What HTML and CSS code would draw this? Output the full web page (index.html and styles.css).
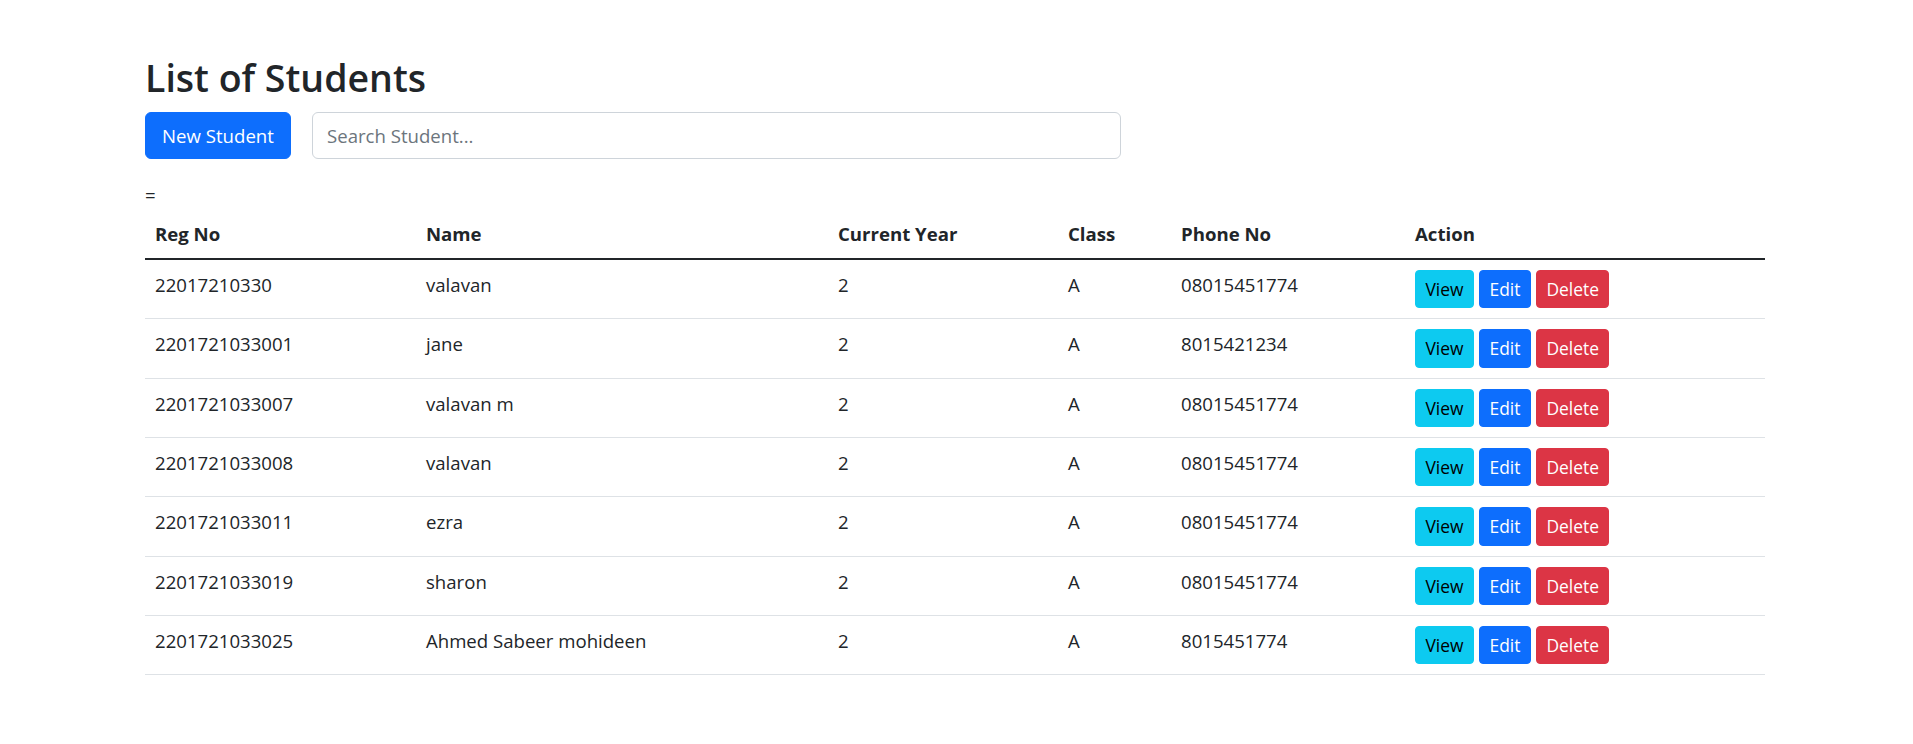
FILE: index.html
```html
<!DOCTYPE html>
<html lang="en">
<head>
<meta charset="utf-8">
<title>List of Students</title>
<link rel="stylesheet" href="styles.css">
</head>
<body>
<div class="page">
  <h2 class="title">List of Students</h2>
  <div class="toolbar">
    <button class="btn btn-primary btn-new">New Student</button>
    <input class="search" type="text" placeholder="Search Student...">
  </div>
  <div class="stray">=</div>
  <table class="table">
    <colgroup>
      <col class="c1"><col class="c2"><col class="c3"><col class="c4"><col class="c5"><col class="c6">
    </colgroup>
    <thead>
      <tr><th>Reg No</th><th>Name</th><th>Current Year</th><th>Class</th><th>Phone No</th><th>Action</th></tr>
    </thead>
    <tbody>
      <tr><td>22017210330</td><td>valavan</td><td>2</td><td>A</td><td>08015451774</td>
        <td><div class="actions"><button class="sbtn info">View</button><button class="sbtn primary">Edit</button><button class="sbtn danger">Delete</button></div></td></tr>
      <tr><td>2201721033001</td><td>jane</td><td>2</td><td>A</td><td>8015421234</td>
        <td><div class="actions"><button class="sbtn info">View</button><button class="sbtn primary">Edit</button><button class="sbtn danger">Delete</button></div></td></tr>
      <tr><td>2201721033007</td><td>valavan m</td><td>2</td><td>A</td><td>08015451774</td>
        <td><div class="actions"><button class="sbtn info">View</button><button class="sbtn primary">Edit</button><button class="sbtn danger">Delete</button></div></td></tr>
      <tr><td>2201721033008</td><td>valavan</td><td>2</td><td>A</td><td>08015451774</td>
        <td><div class="actions"><button class="sbtn info">View</button><button class="sbtn primary">Edit</button><button class="sbtn danger">Delete</button></div></td></tr>
      <tr><td>2201721033011</td><td>ezra</td><td>2</td><td>A</td><td>08015451774</td>
        <td><div class="actions"><button class="sbtn info">View</button><button class="sbtn primary">Edit</button><button class="sbtn danger">Delete</button></div></td></tr>
      <tr><td>2201721033019</td><td>sharon</td><td>2</td><td>A</td><td>08015451774</td>
        <td><div class="actions"><button class="sbtn info">View</button><button class="sbtn primary">Edit</button><button class="sbtn danger">Delete</button></div></td></tr>
      <tr><td>2201721033025</td><td>Ahmed Sabeer mohideen</td><td>2</td><td>A</td><td>8015451774</td>
        <td><div class="actions"><button class="sbtn info">View</button><button class="sbtn primary">Edit</button><button class="sbtn danger">Delete</button></div></td></tr>
    </tbody>
  </table>
</div>
</body>
</html>
```
FILE: styles.css
```css
* { box-sizing: border-box; }
html, body { margin: 0; padding: 0; background: #fff; }
body {
  font-family: "Open Sans", "Noto Sans", sans-serif;
  font-size: 18.6px;
  line-height: 30px;
  color: #212529;
}
.page {
  padding: 54px 148px 0 145px;
}
.title {
  margin: 0 0 10px 0;
  font-size: 37.5px;
  line-height: 48px;
  font-weight: 600;
}
.toolbar {
  display: flex;
  gap: 21px;
  height: 47px;
  margin-bottom: 21px;
}
.btn {
  font-family: inherit;
  border: 1px solid transparent;
  border-radius: 6px;
  cursor: pointer;
}
.btn-primary { background: #0d6efd; color: #fff; border-color: #0d6efd; }
.btn-new {
  width: 146px;
  height: 47px;
  font-size: 18.6px;
  padding: 0;
}
.search {
  width: 809px;
  height: 47px;
  border: 1px solid #ced4da;
  border-radius: 6px;
  padding: 0 14px;
  font-family: inherit;
  font-size: 18.6px;
  color: #212529;
}
.search::placeholder { color: #6c757d; }
.stray { height: 30px; line-height: 30px; }
.table {
  width: 1620px;
  border-collapse: collapse;
  table-layout: fixed;
}
.c1 { width: 271px; }
.c2 { width: 412px; }
.c3 { width: 230px; }
.c4 { width: 113px; }
.c5 { width: 234px; }
.c6 { width: 360px; }
.table th {
  text-align: left;
  font-weight: 700;
  padding: 9px 10px;
  vertical-align: top;
}
.table tbody { border-top: 2px solid #212529; }
.table td {
  padding: 10px 10px;
  vertical-align: top;
  border-bottom: 1px solid #dee2e6;
  height: 59.33px;
}
.actions { display: flex; gap: 5px; }
.sbtn {
  font-family: inherit;
  font-size: 17.4px;
  height: 38.3px;
  line-height: 24px;
  padding: 0 9.5px;
  border: 1px solid transparent;
  border-radius: 4px;
  cursor: pointer;
}
.info { background: #0dcaf0; border-color: #0dcaf0; color: #000; }
.primary { background: #0d6efd; border-color: #0d6efd; color: #fff; }
.danger { background: #dc3545; border-color: #dc3545; color: #fff; }
```
